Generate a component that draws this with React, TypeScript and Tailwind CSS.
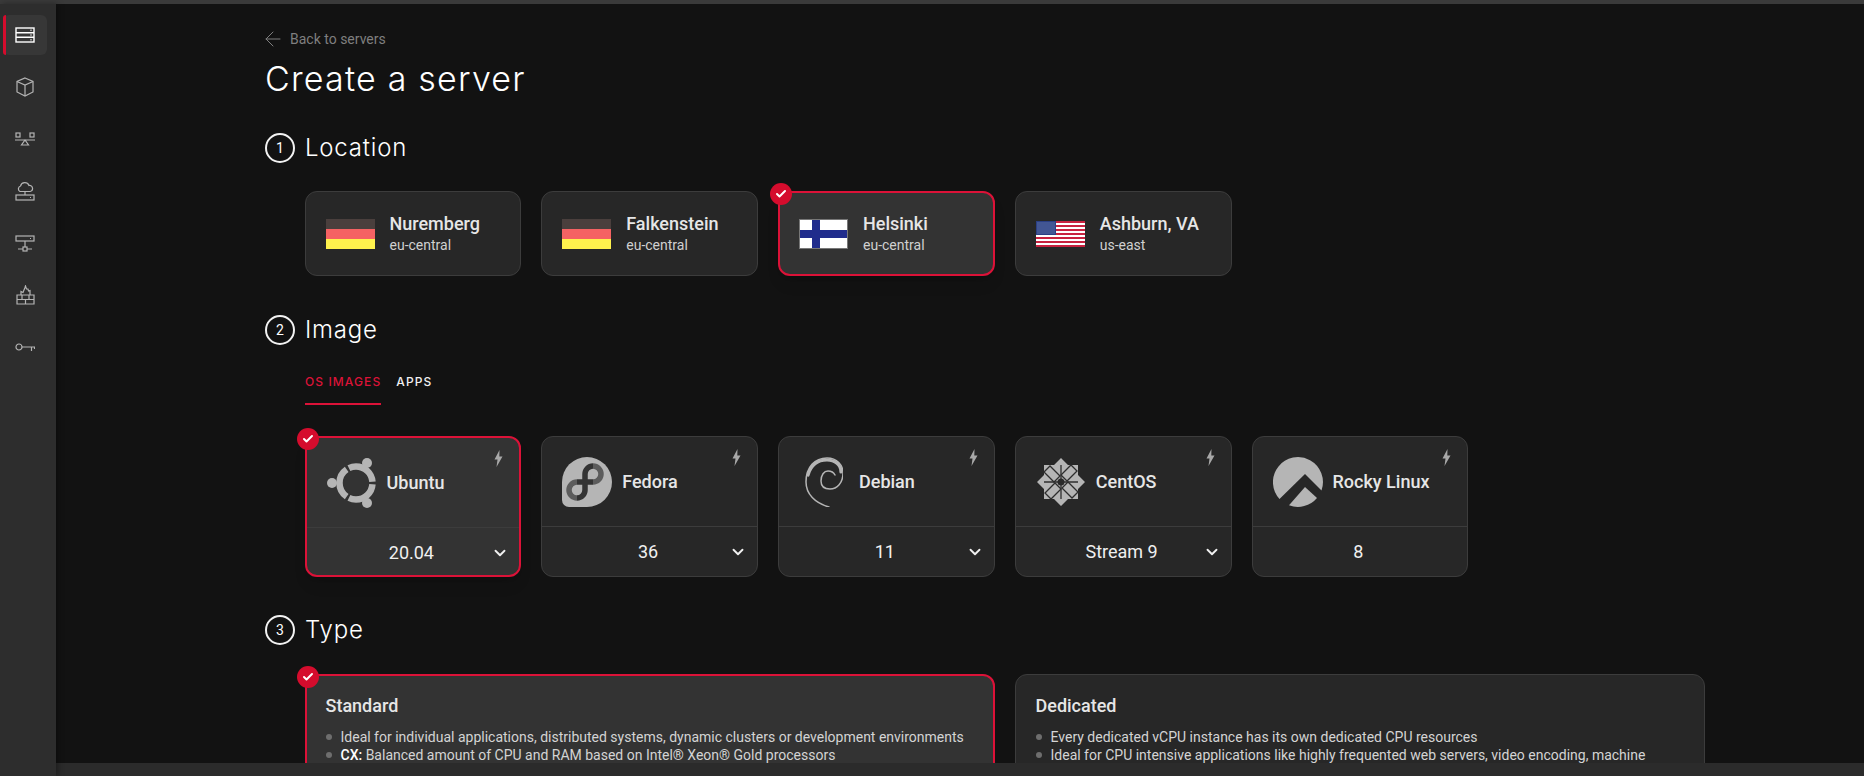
import React from "react";
import { ArrowLeft, Check, ChevronDown } from "lucide-react";

const heading = "font-['Inter',sans-serif] font-light text-white";

function ServersIcon() {
  return (
    <svg width="20" height="16" viewBox="0 0 20 16" fill="none" stroke="currentColor" strokeWidth="1.4">
      <rect x="1" y="1" width="18" height="14" />
      <path d="M1 5.700h18M1 10.300h18" />
      <path d="M15.500 3.300h1M15.500 8h1M15.500 12.700h1" />
    </svg>
  );
}

function VolumeIcon() {
  return (
    <svg width="20" height="20" viewBox="0 0 20 20" fill="none" stroke="currentColor" strokeWidth="1.2">
      <path d="M10 1l8 3.500v10.500l-8 4-8-4V4.500z" />
      <path d="M2 4.500l8 3.500 8-3.500M10 8v11" />
    </svg>
  );
}

function BalancerIcon() {
  return (
    <svg width="20" height="14" viewBox="0 0 20 14" fill="none" stroke="currentColor" strokeWidth="1.2">
      <rect x="1" y="1" width="4" height="4" />
      <rect x="15" y="1" width="4" height="4" />
      <path d="M0 8h20M10 8l-3.500 5h7z" />
    </svg>
  );
}

function CloudServerIcon() {
  return (
    <svg width="20" height="19" viewBox="0 0 20 19" fill="none" stroke="currentColor" strokeWidth="1.2">
      <path d="M5 9.500a3 3 0 0 1 .5-5.500 4.500 4.500 0 0 1 8.500-.5 3 3 0 0 1 1 6z" />
      <path d="M10 9.500V13" />
      <rect x="1" y="13" width="18" height="5" />
      <path d="M15 15.500h1" />
    </svg>
  );
}

function NetworkIcon() {
  return (
    <svg width="20" height="17" viewBox="0 0 20 17" fill="none" stroke="currentColor" strokeWidth="1.2">
      <rect x="1" y="1" width="18" height="5" />
      <path d="M15 3.500h1M10 6v7M3 14h14" />
      <rect x="8" y="12" width="4" height="4" fill="#2d2d2d" />
    </svg>
  );
}

function FirewallIcon() {
  return (
    <svg width="19" height="20" viewBox="0 0 19 20" fill="none" stroke="currentColor" strokeWidth="1.2">
      <path d="M1 10h17v9H1zM1 14.500h17M6 10v4.500M13 10v4.500M9.500 14.500V19" />
      <path d="M5 10V6.500l2 1 2-5 .5-1.500 1 3 1.500 0 .5 2 1.500-.5V10" />
    </svg>
  );
}

function KeyIcon() {
  return (
    <svg width="20" height="9" viewBox="0 0 20 9" fill="none" stroke="currentColor" strokeWidth="1.2">
      <circle cx="4" cy="4" r="3" />
      <path d="M7 4h13M16.500 4v4M19.500 4v2" />
    </svg>
  );
}

function SideItem({ active, children }: { active?: boolean; children: React.ReactNode }) {
  return (
    <div
      className={
        active
          ? "relative flex h-10 w-[44px] items-center justify-center rounded-md bg-[#373737] text-white"
          : "relative flex h-10 w-[44px] items-center justify-center rounded-md text-[#b4b4b4]"
      }
    >
      {active && <span className="absolute top-0 left-0 h-10 w-[3px] rounded-l-sm bg-[#d50c2d]" />}
      {children}
    </div>
  );
}

function SelectedBadge() {
  return (
    <span className="absolute -top-[10px] -left-[10px] flex h-[22px] w-[22px] items-center justify-center rounded-full bg-[#d50c2d] text-white">
      <Check size={12} strokeWidth={4} />
    </span>
  );
}

function Step({ n, title }: { n: number; title: string }) {
  return (
    <div className="flex h-[30px] items-center gap-[10px]">
      <span className="flex h-[30px] w-[30px] items-center justify-center rounded-full border-2 border-[#f2f2f2] text-[14px] text-white">
        {n}
      </span>
      <span className={`${heading} text-[24px] tracking-[0.8px]`}>{title}</span>
    </div>
  );
}

function FlagDE() {
  return (
    <div className="flex h-[30px] w-[49px] flex-col">
      <div className="h-[10px] bg-[#4a3f3d]" />
      <div className="h-[10px] bg-[#f56263]" />
      <div className="h-[10px] bg-[#fff24d]" />
    </div>
  );
}

function FlagFI() {
  return (
    <svg width="49" height="30" viewBox="0 0 49 30">
      <rect x="0.500" y="0.500" width="48" height="29" fill="#fff" stroke="#777" />
      <rect x="13" y="1" width="8" height="28" fill="#202c8c" />
      <rect x="1" y="11" width="47" height="8" fill="#202c8c" />
    </svg>
  );
}

function FlagUS() {
  const stripes = [0, 1, 2, 3, 4, 5, 6];
  const cols = [1, 2, 3, 4, 5, 6, 7, 8, 9];
  const rows = [1, 2, 3, 4, 5, 6];
  return (
    <svg width="49" height="26" viewBox="0 0 49 26">
      <rect width="49" height="26" fill="#fff" />
      {stripes.map((i) => (
        <rect key={i} y={i * 4} width="49" height="2" fill="#c8213f" />
      ))}
      <rect width="20" height="14" fill="#2a3f85" />
      {rows.map((r) =>
        cols.map((c) => (
          <rect key={`${r}-${c}`} x={c * 2 - 0.5} y={r * 2 - 0.5} width="1" height="1" fill="#8d9cc4" />
        ))
      )}
    </svg>
  );
}

function LocationCard({
  name,
  zone,
  flag,
  selected,
}: {
  name: string;
  zone: string;
  flag: React.ReactNode;
  selected?: boolean;
}) {
  return (
    <div
      className={
        selected
          ? "relative flex h-[85px] w-[216.75px] items-center rounded-xl border-2 border-[#dc1238] bg-[#333333] pl-[19px] shadow-lg"
          : "relative flex h-[85px] w-[216.75px] items-center rounded-xl border border-[#3c3c3c] bg-[#272727] pl-[20px]"
      }
    >
      {selected && <SelectedBadge />}
      <div className="flex w-[64px] shrink-0">{flag}</div>
      <div className="flex flex-col">
        <span className="text-[18px] leading-[22px] font-medium text-[#e6e6e6]">{name}</span>
        <span className="text-[14px] leading-[20px] text-[#d0d0d0]">{zone}</span>
      </div>
    </div>
  );
}

function Bolt() {
  return (
    <svg className="absolute top-[12px] right-[16px]" width="9" height="17" viewBox="0 0 9 17" fill="#a8a8a8">
      <path d="M5.500 0L0.500 9.500h3L2.500 17 8.500 6.500h-3.200z" />
    </svg>
  );
}

function UbuntuLogo() {
  return (
    <svg width="50" height="50" viewBox="0 0 50 50" fill="#b5b5b5">
      <circle cx="29" cy="25" r="16.500" fill="none" stroke="#b5b5b5" strokeWidth="6.500" pathLength="120" strokeDasharray="37 3" strokeDashoffset="-1.500" />
      <circle cx="40" cy="5" r="5" />
      <circle cx="5" cy="25" r="5" />
      <circle cx="40" cy="45" r="5" />
    </svg>
  );
}

function FedoraLogo() {
  return (
    <svg width="50" height="50" viewBox="0 0 50 50" fill="none">
      <path d="M0 25a25 25 0 1 1 25 25H7a7 7 0 0 1-7-7z" fill="#b5b5b5" />
      <path d="M31 9a8 8 0 0 1 0 16M15 25a8 8 0 0 0 0 16" stroke="#5c5c5c" strokeWidth="5.500" />
      <path d="M23 33V17a8 8 0 0 1 8-8M15 25h16M23 33a8 8 0 0 1-8 8" stroke="#333333" strokeWidth="5.500" />
    </svg>
  );
}

function DebianLogo() {
  return (
    <svg width="38" height="50" viewBox="0 0 38 50" fill="none" stroke="#b5b5b5" strokeLinecap="round">
      <path d="M24 50C10 46 1 37 1 25 1 10 10 1 22 1c10 0 16 7 16 15 0 10-6 16-13 16-6 0-9-3-9-8 0-6 3-10 7-10 3 0 6 2 7 4" strokeWidth="1.500" />
      <path d="M3 18C6 8 13 3 22 3c8 0 14 5 14 12" strokeWidth="3.200" />
    </svg>
  );
}

function CentosLogo() {
  const turns = [0, 90, 180, 270];
  return (
    <svg width="48" height="48" viewBox="0 0 48 48" fill="none">
      <path d="M24 0l7 7h10v10l7 7-7 7v10H31l-7 7-7-7H7V31l-7-7 7-7V7h10z" fill="#b5b5b5" />
      {turns.map((t) => (
        <g key={t} transform={`rotate(${t} 24 24)`}>
          <path d="M7 14l6-6 10 10-6 6z" fill="#b5b5b5" stroke="#2e2e2e" strokeWidth="1.300" />
        </g>
      ))}
      <path d="M24 7v34M7 24h34" stroke="#2e2e2e" strokeWidth="1.300" />
      <circle cx="24" cy="24" r="3.500" fill="#2a2a2a" />
    </svg>
  );
}

function RockyLogo() {
  return (
    <svg width="50" height="50" viewBox="0 0 50 50" fill="#b5b5b5">
      <path d="M6.500 42A25 25 0 1 1 48.500 33.500L32 17z" />
      <path d="M16 48.300L32 30l12 11A25 25 0 0 1 16 48.300z" />
    </svg>
  );
}

function ImageCard({
  name,
  version,
  logo,
  selected,
  hasMenu = true,
}: {
  name: string;
  version: string;
  logo: React.ReactNode;
  selected?: boolean;
  hasMenu?: boolean;
}) {
  return (
    <div
      className={
        selected
          ? "relative h-[141px] w-[216.75px] rounded-xl border-2 border-[#dc1238] bg-[#333333] shadow-lg"
          : "relative h-[141px] w-[216.75px] rounded-xl border border-[#3c3c3c] bg-[#272727]"
      }
    >
      {selected && <SelectedBadge />}
      <Bolt />
      <div className="flex h-[90px] items-center border-b border-[#3c3c3c] pl-[20px]">
        <div className="mr-[10px] flex w-[50px] shrink-0 justify-center">{logo}</div>
        <span className="text-[18px] font-medium text-[#e6e6e6]">{name}</span>
      </div>
      <div className="relative flex h-[49px] items-center justify-center pr-[3px] text-[18px] text-[#f0f0f0]">
        {version}
        {hasMenu && <ChevronDown className="absolute right-[10px] text-[#f0f0f0]" size={18} strokeWidth={2.500} />}
      </div>
    </div>
  );
}

function TypeCard({
  title,
  selected,
  children,
}: {
  title: string;
  selected?: boolean;
  children: React.ReactNode;
}) {
  return (
    <div
      className={
        selected
          ? "relative h-[190px] w-[690px] shrink-0 rounded-xl border-2 border-[#dc1238] bg-[#333333] px-[19px] pt-[18px]"
          : "relative h-[190px] w-[690px] shrink-0 rounded-xl border border-[#3c3c3c] bg-[#272727] px-[20px] pt-[19px]"
      }
    >
      {selected && <SelectedBadge />}
      <h3 className="text-[18px] leading-6 font-medium text-[#e6e6e6]">{title}</h3>
      <ul className="mt-[10px] flex flex-col gap-0 pl-[15px] text-[14px] leading-[18px] text-[#d4d4d4]">
        {children}
      </ul>
    </div>
  );
}

function Bullet({ children }: { children: React.ReactNode }) {
  return (
    <li className="relative">
      <span className="absolute top-[6px] -left-[15px] h-[6px] w-[6px] rounded-full bg-[#6e6e6e]" />
      {children}
    </li>
  );
}

export default function App() {
  return (
    <div className="flex h-screen flex-col overflow-hidden bg-[#121212] font-['Roboto',sans-serif]">
      <div className="h-[4px] shrink-0 bg-[#3a3a3a]" />
      <div className="flex min-h-0 flex-1">
        {/* Sidebar */}
        <aside className="z-10 flex w-[56px] shrink-0 flex-col items-start gap-[12px] bg-[#2d2d2d] pt-[11px] pl-[3px] shadow-[2px_0_6px_rgba(0,0,0,0.35)]">
          <SideItem active>
            <ServersIcon />
          </SideItem>
          <SideItem>
            <VolumeIcon />
          </SideItem>
          <SideItem>
            <BalancerIcon />
          </SideItem>
          <SideItem>
            <CloudServerIcon />
          </SideItem>
          <SideItem>
            <NetworkIcon />
          </SideItem>
          <SideItem>
            <FirewallIcon />
          </SideItem>
          <SideItem>
            <KeyIcon />
          </SideItem>
        </aside>

        <div className="flex min-w-0 flex-1 flex-col">
          <main className="min-h-0 flex-1 overflow-hidden pt-[26px] pl-[209px]">
            <div className="flex h-[18px] items-center gap-[5px] text-[14px] text-[#7f7f7f]">
              <ArrowLeft className="-ml-[4px]" size={24} strokeWidth={1} />
              <span>Back to servers</span>
            </div>
            <h1 className={`${heading} mt-[9px] text-[34px] leading-[44px] tracking-[1.2px]`}>Create a server</h1>

            <div className="mt-[32px]">
              <Step n={1} title="Location" />
              <div className="mt-[28px] ml-[39.5px] flex gap-[20px]">
                <LocationCard name="Nuremberg" zone="eu-central" flag={<FlagDE />} />
                <LocationCard name="Falkenstein" zone="eu-central" flag={<FlagDE />} />
                <LocationCard name="Helsinki" zone="eu-central" flag={<FlagFI />} selected />
                <LocationCard name="Ashburn, VA" zone="us-east" flag={<FlagUS />} />
              </div>
            </div>

            <div className="mt-[39px]">
              <Step n={2} title="Image" />
              <div className="mt-[21px] ml-[40px] flex gap-[15px] font-['Inter',sans-serif] text-[12px] font-medium tracking-[1.1px]">
                <span className="h-[39px] border-b-2 border-[#dc1238] pt-[7px] text-[#dc1238]">OS IMAGES</span>
                <span className="pt-[7px] text-[#f0f0f0]">APPS</span>
              </div>
              <div className="mt-[31px] ml-[39.5px] flex gap-[20px]">
                <ImageCard name="Ubuntu" version="20.04" logo={<UbuntuLogo />} selected />
                <ImageCard name="Fedora" version="36" logo={<FedoraLogo />} />
                <ImageCard name="Debian" version="11" logo={<DebianLogo />} />
                <ImageCard name="CentOS" version="Stream 9" logo={<CentosLogo />} />
                <ImageCard name="Rocky Linux" version="8" logo={<RockyLogo />} hasMenu={false} />
              </div>
            </div>

            <div className="mt-[38px]">
              <Step n={3} title="Type" />
              <div className="mt-[29px] ml-[39.5px] flex gap-[20px]">
                <TypeCard title="Standard" selected>
                  <Bullet>Ideal for individual applications, distributed systems, dynamic clusters or development environments</Bullet>
                  <Bullet>
                    <b className="font-medium text-white">CX:</b> Balanced amount of CPU and RAM based on Intel® Xeon® Gold processors
                  </Bullet>
                </TypeCard>
                <TypeCard title="Dedicated">
                  <Bullet>Every dedicated vCPU instance has its own dedicated CPU resources</Bullet>
                  <Bullet>Ideal for CPU intensive applications like highly frequented web servers, video encoding, machine</Bullet>
                </TypeCard>
              </div>
            </div>
          </main>
          <div className="h-[13px] shrink-0 bg-[#2b2b2b]" />
        </div>
      </div>
    </div>
  );
}
